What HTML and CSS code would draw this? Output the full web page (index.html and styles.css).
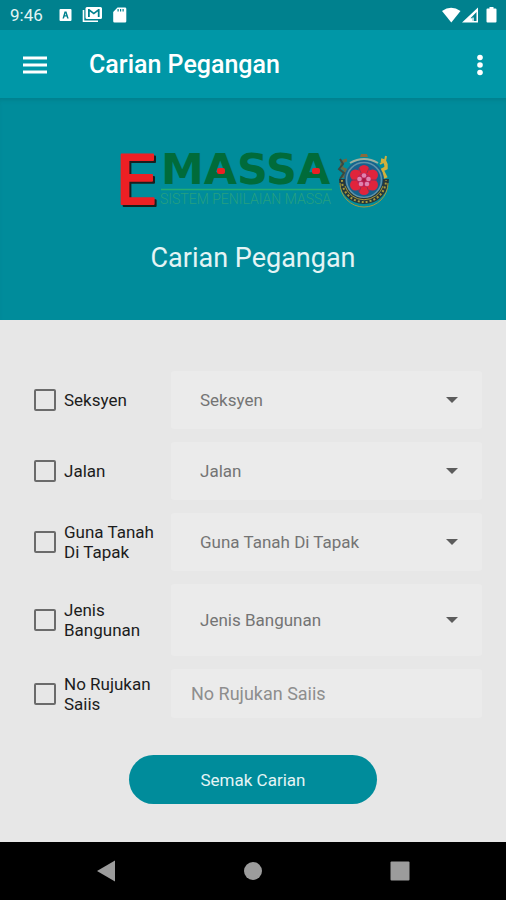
FILE: index.html
```html
<!DOCTYPE html>
<html lang="ms">
<head>
	<meta charset="UTF-8">
	<meta name="viewport" content="width=device-width, initial-scale=1">
	<title>Carian Pegangan</title>
	<link rel="stylesheet" href="styles.css">
</head>
<body>
	<div class="status">
		<span class="time">9:46</span>
		<svg class="notif" width="68" height="18" viewBox="0 0 68 18">
			<path fill="#fff" fill-rule="evenodd" d="M1.500 3h10q1 0 1 1v10q0 1-1 1h-10q-1 0-1-1V4q0-1 1-1zM3.500 12.500h1.500l.6-2h2l.6 2h1.500L7.500 5.500h-2zM6 9.200l.6-2.200.6 2.200z"/>
			<path fill="none" stroke="#fff" stroke-width="1.600" d="M24.500 4v11.200h14.500"/>
			<path fill="#fff" fill-rule="evenodd" d="M28 1h13.500q1.500 0 1.500 1.500v9q0 1.500-1.500 1.500H28q-1.500 0-1.500-1.500v-9Q26.500 1 28 1zM29 3v8h1.800V5.500l4 3 4-3V11h1.800V3h-1.300l-4.500 3.400L30.300 3z"/>
			<path fill="#fff" fill-rule="evenodd" d="M58.500 1.500h7.500q1.300 0 1.300 1.300v12.400q0 1.300-1.300 1.300H55.500q-1.300 0-1.300-1.300V6zM58.500 3v2.500h1.200V3zM61 3v2.500h1.200V3zM63.500 3v2.500h1.200V3z"/>
		</svg>
		<svg class="signals" width="56" height="18" viewBox="0 0 56 18">
			<path fill="#fff" d="M0 5Q9-1.500 18.500 5L9.300 16.500z"/>
			<path fill="#fff" fill-rule="evenodd" d="M36 1.500v15H20zM34.500 6l-6 6.200h2V15h4z"/>
			<path fill="#fff" d="M30.500 11.500h1.200V15h-1.200z"/>
			<path fill="#fff" d="M47.500 1h4v1.500h2q1 0 1 1v12q0 1-1 1h-8q-1 0-1-1v-12q0-1 1-1h2z"/>
		</svg>
	</div>

	<header class="appbar">
		<button class="icon-btn" type="button" aria-label="Menu">
			<svg width="24" height="18" viewBox="0 0 24 18"><path stroke="#fff" stroke-width="3" d="M0 2h24M0 9h24M0 16h24"/></svg>
		</button>
		<h1 class="title">Carian Pegangan</h1>
		<button class="icon-btn" type="button" aria-label="Lagi">
			<svg width="6" height="22" viewBox="0 0 6 22" fill="#fff"><circle cx="3" cy="3.500" r="2.800"/><circle cx="3" cy="11" r="2.800"/><circle cx="3" cy="18.500" r="2.800"/></svg>
		</button>
	</header>

	<section class="hero">
		<svg class="logo" width="274" height="60" viewBox="0 0 274 60">
			<text class="logo-e" x="-1" y="54">E</text>
			<text class="logo-name" x="45" y="34">MASSA</text>
			<rect x="101" y="18" width="8" height="6" rx="2" fill="#ed2024"/>
			<rect x="196" y="18" width="8" height="6" rx="2" fill="#ed2024"/>
			<path stroke="#24ad72" stroke-width="1.500" d="M45 39.500h171"/>
			<text class="logo-sub" x="44" y="54">SISTEM PENILAIAN MASSA</text>
			<!-- jata -->
			<g transform="translate(248 30)">
				<path fill="none" stroke="#6b6a45" stroke-width="3" d="M-17-20q-7 1-5 8l4 2-3 8"/>
				<path fill="none" stroke="#d3b03b" stroke-width="3.500" d="M17-20q6 1 5 8l-4 2 4 8"/>
				<path fill="none" stroke="#394a43" stroke-width="2" d="M-24-21l3 5-4 5 5 4-4 6"/>
				<path fill="none" stroke="#d3b03b" stroke-width="2" d="M22-24l-1 5-5 3"/>
				<circle r="20" fill="#17618c"/>
				<circle r="17.500" fill="none" stroke="#5f93a8" stroke-width="1.500"/>
				<path fill="none" stroke="#26363a" stroke-width="6" d="M-22-1a22 22 0 0 0 44 0"/>
				<path fill="none" stroke="#a89a3c" stroke-width="2" stroke-dasharray="2 2" d="M-22 0a22 22 0 0 0 44 0"/>
				<path fill="none" stroke="#a89a3c" stroke-width="1" d="M-19 6a20 20 0 0 0 38 0M-24 3a24 24 0 0 0 48 0"/>
				<path fill="none" stroke="#9fb0a0" stroke-width="2" d="M-14-17q14-8 28 0"/>
				<path fill="#8a6a3c" d="M-3-26h6l1 3h-8z"/>
				<g fill="#e0243c">
					<circle cy="-9.500" r="5.500"/><circle cx="8.500" cy="-5" r="5.500"/><circle cx="8.500" cy="5" r="5.500"/>
					<circle cy="9.500" r="5.500"/><circle cx="-8.500" cy="5" r="5.500"/><circle cx="-8.500" cy="-5" r="5.500"/>
				</g>
				<path stroke="#8c2f55" stroke-width="1" d="M-5-12l2 5M5-12l-2 5M-13 0h6M13 0h-6M-5 12l2-5M5 12l-2-5"/>
				<circle r="7" fill="#bd2356"/>
				<g fill="#df83b0">
					<circle cy="-4.500" r="2.300"/><circle cx="4.500" cy="-1" r="2.300"/><circle cx="3" cy="4" r="2.300"/>
					<circle cx="-3" cy="4" r="2.300"/><circle cx="-4.500" cy="-1" r="2.300"/>
				</g>
				<circle r="1.800" fill="#a61843"/>
			</g>
		</svg>
		<h2 class="subtitle">Carian Pegangan</h2>
	</section>

	<form class="search">
		<div class="row">
			<label class="check"><input type="checkbox">Seksyen</label>
			<div class="drop"><select aria-label="Seksyen"><option>Seksyen</option></select></div>
		</div>
		<div class="row">
			<label class="check"><input type="checkbox">Jalan</label>
			<div class="drop"><select aria-label="Jalan"><option>Jalan</option></select></div>
		</div>
		<div class="row">
			<label class="check"><input type="checkbox">Guna Tanah Di Tapak</label>
			<div class="drop"><select aria-label="Guna Tanah Di Tapak"><option>Guna Tanah Di Tapak</option></select></div>
		</div>
		<div class="row">
			<label class="check"><input type="checkbox">Jenis Bangunan</label>
			<div class="drop tall"><select aria-label="Jenis Bangunan"><option>Jenis Bangunan</option></select></div>
		</div>
		<div class="row">
			<label class="check"><input type="checkbox">No Rujukan Saiis</label>
			<input class="text" type="text" aria-label="No Rujukan Saiis" placeholder="No Rujukan Saiis">
		</div>
		<button class="submit" type="button">Semak Carian</button>
	</form>

	<nav class="navbar">
		<button class="icon-btn" type="button" aria-label="Kembali">
			<svg width="20" height="22" viewBox="0 0 20 22"><path fill="#9c9c9c" d="M19 .5v21L1 11z"/></svg>
		</button>
		<button class="icon-btn" type="button" aria-label="Utama">
			<svg width="20" height="20" viewBox="0 0 20 20"><circle cx="10" cy="10" r="9" fill="#9c9c9c"/></svg>
		</button>
		<button class="icon-btn" type="button" aria-label="Terkini">
			<svg width="20" height="20" viewBox="0 0 20 20"><rect x=".5" y=".5" width="19" height="19" rx="1" fill="#9c9c9c"/></svg>
		</button>
	</nav>
</body>
</html>
```

FILE: styles.css
```css
* {
	box-sizing: border-box;
}
body {
	margin: 0;
	min-height: 100vh;
	display: flex;
	flex-direction: column;
	background: #e7e7e7;
	font-family: Roboto, "Liberation Sans", sans-serif;
	font-size: 17px;
	line-height: 20px;
	color: #1c1c1c;
}
svg {
	display: block;
}
button, input, select {
	font: inherit;
}
.icon-btn {
	padding: 0;
	border: 0;
	background: none;
	cursor: pointer;
}

.status {
	display: flex;
	align-items: center;
	height: 30px;
	padding: 0 8px 0 10px;
	background: #00818e;
	color: #e4f4f5;
}
.notif {
	margin-left: 16px;
}
.signals {
	margin-left: auto;
}

.appbar {
	display: flex;
	align-items: center;
	height: 68px;
	padding: 2px 23px 0;
	background: #0097a7;
}
.title {
	flex: 1;
	margin: 0 0 0 42px;
	font-size: 25px;
	font-weight: 500;
	line-height: 32px;
	color: #fff;
}

.hero {
	display: flex;
	flex-direction: column;
	align-items: center;
	padding: 52px 16px 46px;
	background: #008c9b;
	box-shadow: inset 0 4px 4px -2px #007f8c;
}
.logo {
	overflow: visible;
}
.logo-e {
	font: 68px "DejaVu Sans", sans-serif;
	fill: #ed2024;
	stroke: #ed2024;
	stroke-width: 2px;
	stroke-linejoin: round;
	filter: drop-shadow(2px 2px 0 #17201f);
}
.logo-name {
	font: bold 43px "DejaVu Sans", sans-serif;
	fill: #006b3a;
}
.logo-sub {
	font-size: 14px;
	font-weight: 300;
	fill: #25a080;
}
.subtitle {
	margin: 32px 0 0;
	font-size: 27px;
	font-weight: 400;
	line-height: 32px;
	color: #e4f4f5;
}

.search {
	display: flex;
	flex-direction: column;
	gap: 13px;
	padding: 51px 24px 37px;
}
.row {
	display: grid;
	grid-template-columns: 124px 1fr;
	gap: 13px;
	align-items: center;
	padding-left: 10px;
}
.check {
	display: flex;
	align-items: center;
	gap: 8px;
}
.check input {
	flex: none;
	appearance: none;
	width: 22px;
	height: 22px;
	margin: 0;
	border: 2px solid #6b6b6b;
	border-radius: 2px;
}
.check input:checked {
	background: #008c9b;
}
.drop {
	position: relative;
}
.drop::after {
	content: "";
	position: absolute;
	right: 24px;
	top: 50%;
	margin-top: -3px;
	border: 6px solid transparent;
	border-top-color: #5c5c5c;
	border-bottom: 0;
	pointer-events: none;
}
.drop select {
	appearance: none;
	display: block;
	width: 100%;
	height: 58px;
	padding: 0 48px 0 29px;
	border: 0;
	border-radius: 3px;
	background: #ebebeb;
	color: #747474;
}
.tall select {
	height: 72px;
}
.text {
	width: 100%;
	height: 49px;
	padding: 0 20px;
	border: 0;
	border-radius: 3px;
	background: #ebebeb;
	font-size: 18px;
	color: #1c1c1c;
}
.text::placeholder {
	color: #8e8e8e;
	opacity: 1;
}
.submit {
	align-self: center;
	width: 54%;
	height: 49px;
	margin-top: 24px;
	border: 0;
	border-radius: 25px;
	background: #008c9b;
	color: #e4f4f5;
	cursor: pointer;
}

.navbar {
	display: flex;
	justify-content: space-between;
	align-items: center;
	height: 58px;
	margin-top: auto;
	padding: 0 19%;
	background: #000;
}
```
